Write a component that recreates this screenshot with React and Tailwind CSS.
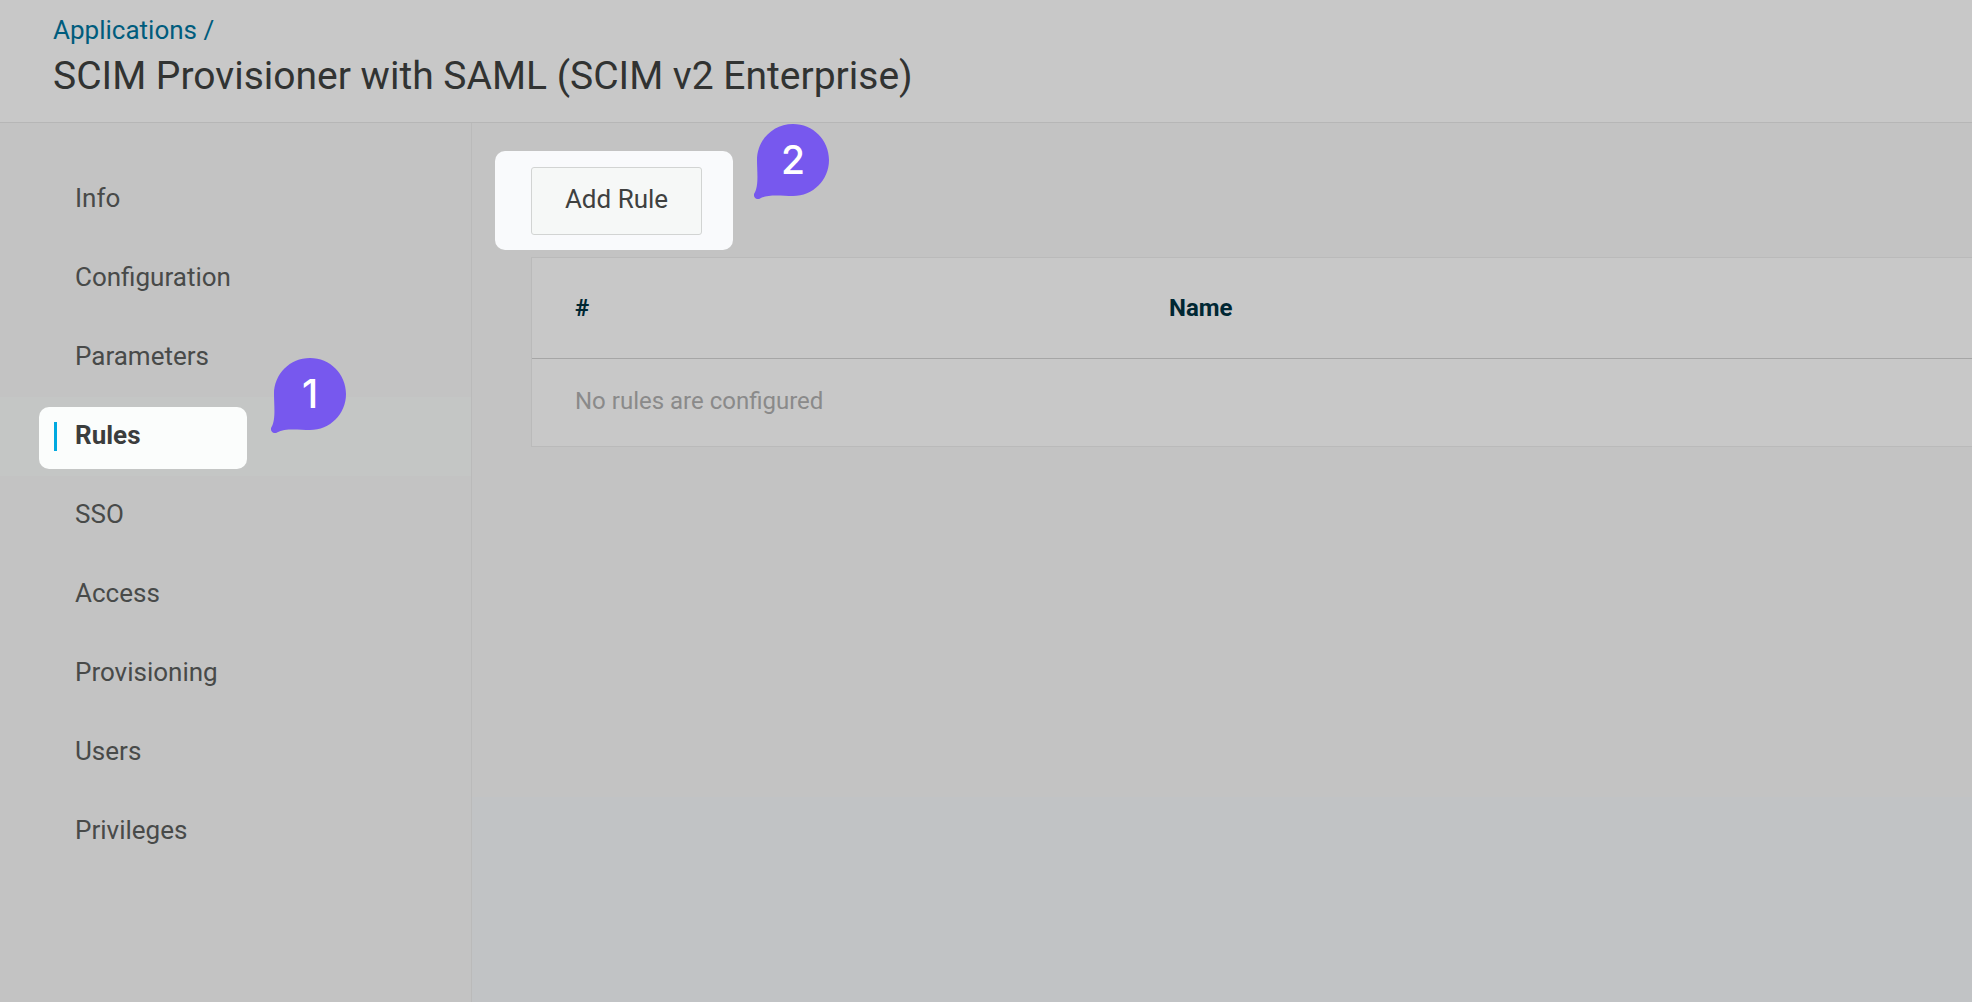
const navItems = [
  "Info",
  "Configuration",
  "Parameters",
  "Rules",
  "SSO",
  "Access",
  "Provisioning",
  "Users",
  "Privileges",
]

const columns = ["#", "Name"]

// Numbered callout bubble with its tail at the bottom left
function StepBadge({ number, className }) {
  return (
    <div className={`absolute size-[75px] ${className}`}>
      <svg viewBox="0 0 75 75" className="size-full" aria-hidden="true">
        <path
          d="M39 0C59 0 75 16 75 36S59 72 39 72C28 72 14 70 6 74.400C2.500 76.500-1.500 73 .4 69.200C5 62 3 47 3 36C3 16 19 0 39 0Z"
          fill="#7758ee"
        />
      </svg>
      <span className="absolute inset-0 flex items-start justify-center pt-4 pl-[3px] font-[Inter,sans-serif] text-[39px] leading-10 font-medium text-white">
        {number}
      </span>
    </div>
  )
}

function NavItem({ label, active }) {
  if (!active) {
    return (
      <a href="#" className="flex h-[79px] items-center pb-[3px] pl-[75px]">
        {label}
      </a>
    )
  }

  return (
    <div className="relative h-[79px] bg-[#c4c6c5] pt-[10px] pl-[39px]">
      <a
        href="#"
        aria-current="page"
        className="flex h-[62px] w-[208px] items-center gap-[18px] rounded-[10px] bg-[#fbfdfc] pb-[3px] pl-[15px] font-bold text-[#3b3d3d]"
      >
        <span className="h-[29px] w-[3px] bg-[#00a9e0]" />
        <span className="pb-[3px]">{label}</span>
      </a>
      <StepBadge number={1} className="-top-[39px] left-[271px]" />
    </div>
  )
}

export default function App() {
  return (
    <div className="flex min-h-screen flex-col bg-[#c3c3c3] font-[Roboto,sans-serif] text-[26px] leading-8 text-[#484a49]">
      <header className="border-b border-[#b6b6b6] bg-[#c8c8c8] px-[53px] pt-[14px] pb-[22px]">
        <a href="#" className="block text-[#005c7d]">
          Applications /
        </a>
        <h1 className="pt-[6px] text-[39px] leading-[48px] text-[#313332]">
          SCIM Provisioner with SAML (SCIM v2 Enterprise)
        </h1>
      </header>

      <div className="flex grow">
        <nav className="w-[472px] shrink-0 border-r border-[#bababa] pt-[37px]">
          {navItems.map((label) => (
            <NavItem key={label} label={label} active={label === "Rules"} />
          ))}
        </nav>

        {/* The page background turns slightly cooler below the content area */}
        <main className="min-w-0 grow bg-linear-to-b from-[#c3c3c3] from-[674px] to-[#c1c3c5] to-[674px] pt-7">
          <div className="relative ml-[23px] w-fit rounded-[10px] bg-[#f9fafc] pt-4 pr-[31px] pb-[15px] pl-9">
            <button
              type="button"
              className="h-[68px] w-[171px] rounded-[3px] border border-[#d2d4d3] bg-[#f6f8f7] pb-1 text-[#3f4140]"
            >
              Add Rule
            </button>
            <StepBadge number={2} className="-top-[27px] left-[259px]" />
          </div>

          {/* Rules table */}
          <div className="mt-[7px] ml-[59px] border-y border-l border-[#bababa] bg-[#c8c8c8]">
            <table className="w-full table-fixed text-left text-[24px]">
              <thead>
                <tr className="h-[100px] border-b border-[#a6a6a6] text-[#002733]">
                  {columns.map((col) => (
                    <th key={col} scope="col" className="pl-[43px] font-bold first:w-[594px]">
                      {col}
                    </th>
                  ))}
                </tr>
              </thead>
              <tbody>
                <tr className="h-[88px] text-[#8a8a8a]">
                  <td colSpan={columns.length} className="pb-[2px] pl-[43px]">
                    No rules are configured
                  </td>
                </tr>
              </tbody>
            </table>
          </div>
        </main>
      </div>
    </div>
  )
}
